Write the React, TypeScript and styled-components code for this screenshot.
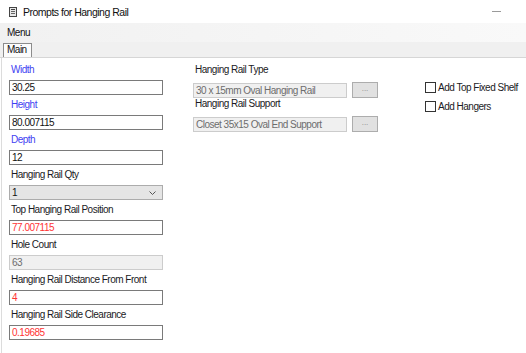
import React from "react";
import styled, { createGlobalStyle } from "styled-components";

const Global = createGlobalStyle`
  html, body { margin: 0; padding: 0; background: #fff; }
  body { font-family: "Liberation Sans", Arial, sans-serif; }
  * { box-sizing: border-box; }
`;

const Window = styled.div`
  width: 526px;
  height: 353px;
  display: flex;
  flex-direction: column;
  background: #fff;
  overflow: hidden;
  font-size: 10px;
  letter-spacing: -0.5px;
  color: #1a1a24;
`;

const TitleBar = styled.div`
  height: 23px;
  display: flex;
  align-items: center;
  padding: 0 25px 0 9px;
`;

const Title = styled.span`
  margin-left: 6px;
  font-size: 10.5px;
  color: #111;
`;

const Minimize = styled.div`
  margin-left: auto;
  width: 9px;
  height: 1px;
  background: #9a9a9a;
`;

const MenuBar = styled.div`
  height: 19px;
  display: flex;
  align-items: center;
  padding-left: 7px;
  background: linear-gradient(to right, #f1f1f1, #f9f9f9);
  color: #111;
`;

const TabStrip = styled.div`
  height: 16px;
  background: #f0f0f0;
  border-bottom: 1px solid #d6d6d6;
  display: flex;
  align-items: flex-end;
  padding-left: 3px;
`;

const Tab = styled.div`
  height: 14px;
  line-height: 12px;
  padding: 0 4px 0 3px;
  border: 1px solid #8c8c8c;
  border-bottom: none;
  background: #fcfcfc;
  color: #111;
`;

const Body = styled.div`
  flex: 1;
  display: flex;
  align-items: flex-start;
  margin-left: 1px;
  border-left: 1px solid #dcdcdc;
  padding-left: 7px;
`;

const LeftColumn = styled.div`
  width: 154px;
  padding-top: 2px;
  display: flex;
  flex-direction: column;
`;

const Label = styled.div<{ $blue?: boolean }>`
  height: 20px;
  line-height: 20px;
  padding-left: 2px;
  white-space: nowrap;
  color: ${(p) => (p.$blue ? "#3f3ff2" : "#1a1a24")};
`;

const Input = styled.div<{ $red?: boolean; $disabled?: boolean }>`
  height: 15px;
  width: 154px;
  line-height: 13px;
  padding-left: 2px;
  border: 1px solid ${(p) => (p.$disabled ? "#cccccc" : "#7a7a7a")};
  background: ${(p) => (p.$disabled ? "#f0f0f0" : "#fff")};
  color: ${(p) => (p.$disabled ? "#6d6d6d" : p.$red ? "#ff3434" : "#111")};
  white-space: nowrap;
  overflow: hidden;
`;

const Select = styled.div`
  height: 15px;
  width: 154px;
  display: flex;
  align-items: center;
  padding: 0 6px 0 2px;
  border: 1px solid #acacac;
  background: #e5e5e5;
  color: #111;
`;

const Chevron = styled.svg`
  margin-left: auto;
`;

const MiddleColumn = styled.div`
  margin-left: 30px;
  padding-top: 6px;
  display: flex;
  flex-direction: column;
`;

const MidLabel = styled.div`
  height: 18px;
  line-height: 12px;
  padding-left: 2px;
  white-space: nowrap;
  color: #1a1a24;
`;

const PickerRow = styled.div`
  height: 16px;
  display: flex;
  align-items: center;
  gap: 5px;
`;

const DotsButton = styled.div`
  width: 26px;
  height: 16px;
  border: 1px solid #adadad;
  background: #e1e1e1;
  color: #888;
  font-size: 8px;
  line-height: 12px;
  text-align: center;
  letter-spacing: 0;
`;

const RightColumn = styled.div`
  margin-left: 47px;
  padding-top: 20px;
  display: flex;
  flex-direction: column;
`;

const CheckRow = styled.label`
  height: 19px;
  display: flex;
  align-items: center;
  gap: 2px;
  color: #1a1a24;
  white-space: nowrap;
`;

const Box = styled.span`
  width: 11px;
  height: 11px;
  border: 1px solid #333;
  background: #fff;
`;

const leftFields: {
  label: string;
  value: string;
  blue?: boolean;
  red?: boolean;
  disabled?: boolean;
  select?: boolean;
}[] = [
  { label: "Width", value: "30.25", blue: true },
  { label: "Height", value: "80.007115", blue: true },
  { label: "Depth", value: "12", blue: true },
  { label: "Hanging Rail Qty", value: "1", select: true },
  { label: "Top Hanging Rail Position", value: "77.007115", red: true },
  { label: "Hole Count", value: "63", disabled: true },
  { label: "Hanging Rail Distance From Front", value: "4", red: true },
  { label: "Hanging Rail Side Clearance", value: "0.19685", red: true },
];

export default function App() {
  return (
    <>
      <Global />
      <Window>
        <TitleBar>
          <svg width="8" height="10" viewBox="0 0 8 10">
            <rect x="0.5" y="0.5" width="7" height="9" fill="#e8e8e8" stroke="#444" />
            <rect x="2" y="2" width="4" height="1" fill="#444" />
            <rect x="2" y="4" width="4" height="1" fill="#666" />
            <rect x="2" y="6" width="4" height="1" fill="#666" />
          </svg>
          <Title>Prompts for Hanging Rail</Title>
          <Minimize />
        </TitleBar>
        <MenuBar>Menu</MenuBar>
        <TabStrip>
          <Tab>Main</Tab>
        </TabStrip>
        <Body>
          <LeftColumn>
            {leftFields.map((f) => (
              <React.Fragment key={f.label}>
                <Label $blue={f.blue}>{f.label}</Label>
                {f.select ? (
                  <Select>
                    {f.value}
                    <Chevron width="7" height="4" viewBox="0 0 7 4">
                      <path d="M0.5 0.5 L3.5 3.5 L6.5 0.5" fill="none" stroke="#555" strokeWidth="1" />
                    </Chevron>
                  </Select>
                ) : (
                  <Input $red={f.red} $disabled={f.disabled}>
                    {f.value}
                  </Input>
                )}
              </React.Fragment>
            ))}
          </LeftColumn>
          <MiddleColumn>
            <MidLabel>Hanging Rail Type</MidLabel>
            <PickerRow>
              <Input $disabled>30 x 15mm Oval Hanging Rail</Input>
              <DotsButton>...</DotsButton>
            </PickerRow>
            <MidLabel>Hanging Rail Support</MidLabel>
            <PickerRow>
              <Input $disabled>Closet 35x15 Oval End Support</Input>
              <DotsButton>...</DotsButton>
            </PickerRow>
          </MiddleColumn>
          <RightColumn>
            <CheckRow>
              <Box />
              Add Top Fixed Shelf
            </CheckRow>
            <CheckRow>
              <Box />
              Add Hangers
            </CheckRow>
          </RightColumn>
        </Body>
      </Window>
    </>
  );
}
